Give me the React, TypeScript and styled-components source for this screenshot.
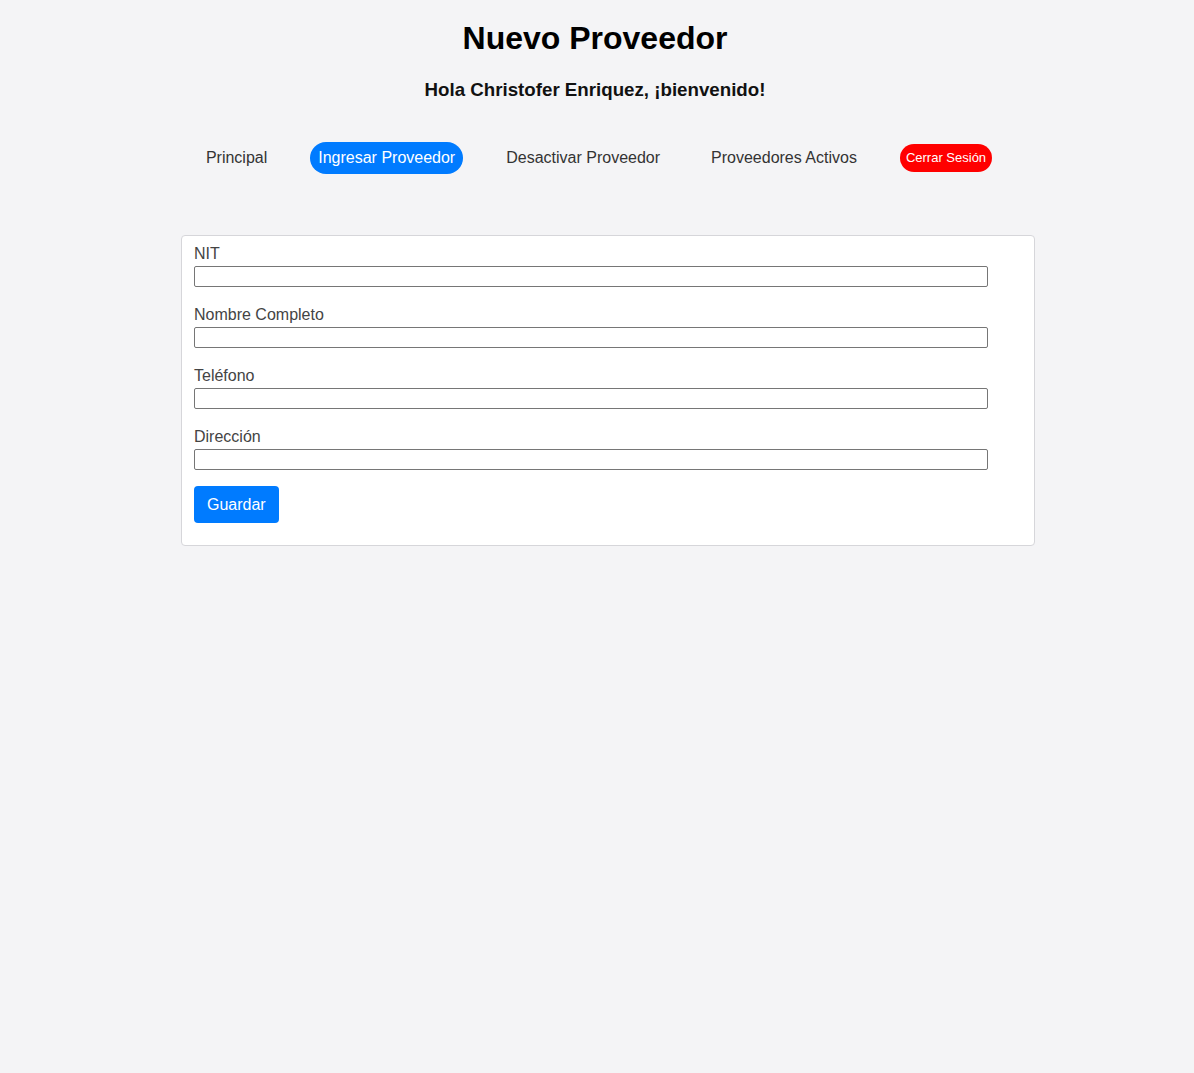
import React from "react";
import styled, { createGlobalStyle } from "styled-components";

const Global = createGlobalStyle`
  html, body {
    margin: 0;
    padding: 0;
    background: #f4f4f6;
    font-family: "Liberation Sans", Arial, sans-serif;
    min-height: 100%;
  }
  body { min-height: 1073px; }
`;

const Page = styled.div`
  padding: 20px 4px 0 0;
  display: flex;
  flex-direction: column;
`;

const Title = styled.h1`
  margin: 0;
  font-size: 32px;
  line-height: 37px;
  font-weight: bold;
  text-align: center;
  color: #000;
`;

const Subtitle = styled.h3`
  margin: 22px 0 0;
  font-size: 18.72px;
  line-height: 22px;
  font-weight: bold;
  text-align: center;
  color: #111;
`;

const Nav = styled.nav`
  margin-top: 41px;
  display: flex;
  justify-content: center;
  align-items: center;
  gap: 35px;
`;

const NavItem = styled.a<{ $active?: boolean }>`
  display: block;
  padding: 7px 8px;
  font-size: 16px;
  line-height: 18px;
  border-radius: 16px;
  text-decoration: none;
  cursor: pointer;
  color: ${(p) => (p.$active ? "#fff" : "#333")};
  background: ${(p) => (p.$active ? "#007bff" : "transparent")};
`;

const LogoutButton = styled.button`
  border: none;
  padding: 6px 6px;
  font-family: inherit;
  font-size: 13px;
  line-height: 16px;
  border-radius: 14px;
  background: #ff0000;
  color: #fff;
  cursor: pointer;
`;

const Card = styled.div`
  margin: 61px 0 0 181px;
  width: 854px;
  box-sizing: border-box;
  background: #fff;
  border: 1px solid #d6d6da;
  border-radius: 4px;
  padding: 9px 12px 22px;
`;

const Form = styled.form`
  display: flex;
  flex-direction: column;
  align-items: flex-start;
`;

const Group = styled.div`
  display: flex;
  flex-direction: column;
  margin-bottom: 19px;
`;

const Label = styled.label`
  font-size: 16px;
  line-height: 18px;
  color: #444;
  margin-bottom: 3px;
`;

const Input = styled.input`
  box-sizing: border-box;
  width: 794px;
  height: 21px;
  border: 1px solid #767676;
  border-radius: 2px;
  padding: 1px 2px;
  font-size: 13px;
  background: #fff;
  outline: none;
`;

const SubmitButton = styled.button`
  margin-top: -3px;
  border: none;
  border-radius: 4px;
  background: #007bff;
  color: #fff;
  font-family: inherit;
  font-size: 16px;
  line-height: 25px;
  padding: 6px 13px;
  cursor: pointer;
`;

const fields = ["NIT", "Nombre Completo", "Teléfono", "Dirección"];

export default function App() {
  return (
    <>
      <Global />
      <Page>
        <Title>Nuevo Proveedor</Title>
        <Subtitle>Hola Christofer Enriquez, ¡bienvenido!</Subtitle>
        <Nav>
          <NavItem>Principal</NavItem>
          <NavItem $active>Ingresar Proveedor</NavItem>
          <NavItem>Desactivar Proveedor</NavItem>
          <NavItem>Proveedores Activos</NavItem>
          <LogoutButton>Cerrar Sesión</LogoutButton>
        </Nav>
        <Card>
          <Form onSubmit={(e) => e.preventDefault()}>
            {fields.map((f) => (
              <Group key={f}>
                <Label>{f}</Label>
                <Input type="text" />
              </Group>
            ))}
            <SubmitButton type="submit">Guardar</SubmitButton>
          </Form>
        </Card>
      </Page>
    </>
  );
}
